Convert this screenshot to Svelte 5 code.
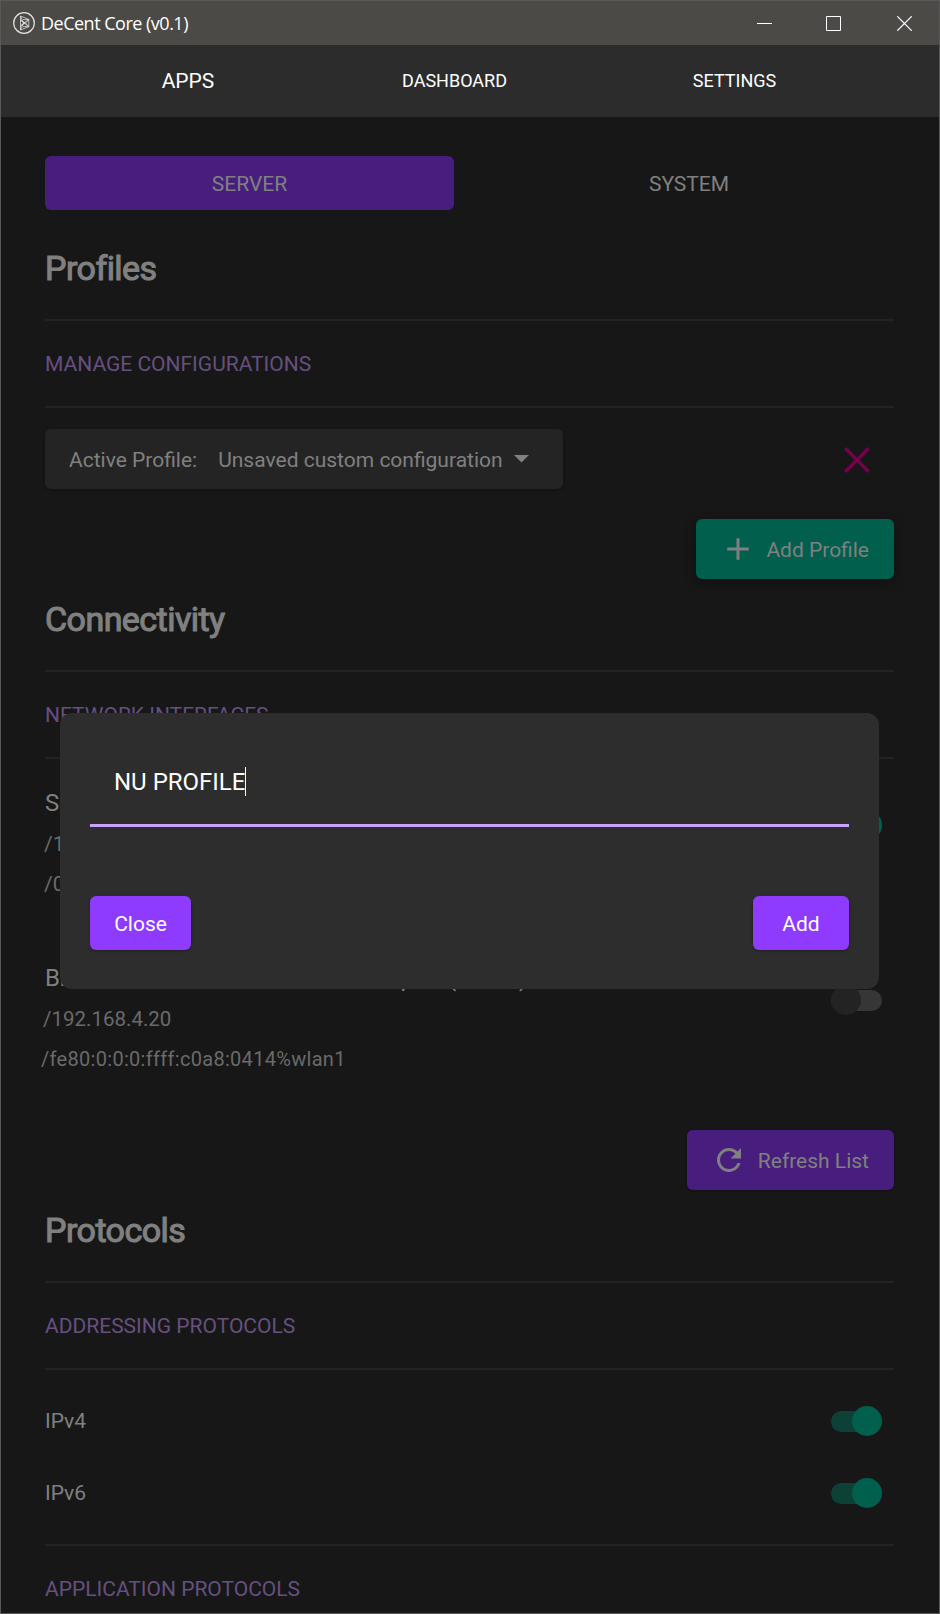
<script>
  let profileName = $state('NU PROFILE');
  const interfaces = [
    { name: 'Software Loopback Interface 1 (lo)', v4: '/127.0.0.1', v6: '/0:0:0:0:0:0:0:1', on: true },
    { name: 'Broadcom 802.11ac Network Adapter (wlan1)', v4: '/192.168.4.20', v6: '/fe80:0:0:0:ffff:c0a8:0414%wlan1', on: false }
  ];
  const protocols = ['IPv4', 'IPv6'];
</script>

{#snippet toggle(on)}
  <span class="toggle" class:on><i></i></span>
{/snippet}

<div class="window">
  <header class="titlebar">
    <svg class="logo" width="22" height="22" viewBox="0 0 22 22" fill="none" stroke="#e4e4e4">
      <circle cx="11" cy="11" r="10.3" stroke-width="1.2" />
      <path d="M7.5 4v14L15.8 14.6V7.4zM7.5 4l3 7-3 7M7.5 8.2l8.3 6.4M7.5 13.8l8.3-6.4M7.5 8.2l5 2.8-5 2.8M10 7.6h5.8L12.5 11l3.3 3.6H10" stroke-width=".75" />
    </svg>
    <span class="title">DeCent Core (v0.1)</span>
    <svg class="controls" width="155" height="15" viewBox="0 0 155 15" fill="none" stroke="#fff">
      <path d="M0 7.5h15M69.5.5h14v14h-14z" />
      <path d="M140.3.3l14.4 14.4M154.7.3l-14.4 14.4" stroke-width="1.2" />
    </svg>
  </header>

  <nav class="nav">
    <span class="active">APPS</span>
    <span>DASHBOARD</span>
    <span>SETTINGS</span>
  </nav>

  <main>
    <div class="tabs">
      <span class="tab selected">SERVER</span>
      <span class="tab">SYSTEM</span>
    </div>

    <h1 class="first">Profiles</h1>
    <h2>MANAGE CONFIGURATIONS</h2>
    <div class="profile-row">
      <div class="select">
        <span class="label">Active Profile:</span>
        <span class="value">Unsaved custom configuration</span>
        <svg width="15" height="8" viewBox="0 0 15 8"><path d="M0 0h15L7.5 7.6z" fill="#808080" /></svg>
      </div>
      <svg class="remove" width="26" height="26" viewBox="0 0 26 26" fill="none" stroke="#76004a" stroke-width="3.5">
        <path d="M1.3 1.3l23.4 23.4M24.7 1.3L1.3 24.7" />
      </svg>
    </div>
    <div class="actions">
      <span class="button teal">
        <svg width="22" height="22" viewBox="0 0 22 22" fill="none" stroke="#808080" stroke-width="3"><path d="M11 .2v21.6M.2 11h21.6" /></svg>
        <span>Add Profile</span>
      </span>
    </div>

    <h1>Connectivity</h1>
    <h2>NETWORK INTERFACES</h2>
    {#each interfaces as item, i}
      <div class="iface">
        <div class="info">
          <div class="name">{item.name}</div>
          <div class="addr" class:v4={i === 1}>{item.v4}</div>
          <div class="addr" class:v6={i === 1}>{item.v6}</div>
        </div>
        {@render toggle(item.on)}
      </div>
    {/each}
    <div class="actions refresh">
      <span class="button purple">
        <svg width="24" height="24" viewBox="4 4 16 16" fill="#808080"><path d="M17.65 6.35A7.96 7.96 0 0 0 12 4a8 8 0 1 0 7.73 10h-2.08A6 6 0 1 1 12 6c1.66 0 3.14.69 4.22 1.78L13 11h7V4z" /></svg>
        <span>Refresh List</span>
      </span>
    </div>

    <h1>Protocols</h1>
    <h2>ADDRESSING PROTOCOLS</h2>
    <div class="protocols">
      {#each protocols as name}
        <div class="protocol"><span>{name}</span>{@render toggle(true)}</div>
      {/each}
    </div>
    <h2 class="last">APPLICATION PROTOCOLS</h2>
  </main>

  <section class="dialog">
    <div class="field"><span>{profileName}</span><i class="caret"></i></div>
    <div class="dialog-actions">
      <button class="close">Close</button>
      <button class="add">Add</button>
    </div>
  </section>
</div>

<style>
  :global(body) { background: #171717; }
  .window {
    position: relative;
    box-sizing: border-box;
    width: 940px;
    height: 1614px;
    overflow: hidden;
    border: 1px solid #5a5958;
    background: #171717;
    color: #808080;
    font: 21px/30px Roboto, sans-serif;
  }
  svg { display: block; flex: none; }
  .titlebar {
    display: flex;
    align-items: center;
    box-sizing: border-box;
    height: 44px;
    padding: 0 27px 0 12px;
    background: #4b4a47;
    color: #fff;
  }
  .logo { margin-top: -1px; }
  .title {
    flex: 1;
    margin-left: 6px;
    font: 18px/44px "Open Sans", sans-serif;
    letter-spacing: -.5px;
  }
  .nav {
    display: grid;
    grid-template-columns: 374px 159px 401px;
    height: 72px;
    background: #2c2c2c;
    color: #fff;
    font-size: 18px;
    line-height: 72px;
    text-align: center;
  }
  .nav .active { font-size: 21px; }
  main { padding: 39px 45px 0 44px; }
  .tabs { display: grid; grid-template-columns: 409px 408px; gap: 31px; }
  .tab { box-sizing: border-box; height: 54px; padding-top: 2px; border-radius: 6px; line-height: 52px; text-align: center; }
  .selected { background: #471e7e; }
  h1 {
    margin: 10px 0 0;
    padding-bottom: 21px;
    border-bottom: 2px solid #222;
    font-size: 34px;
    font-weight: 400;
    letter-spacing: -.55px;
    line-height: 60px;
    -webkit-text-stroke: 1.1px #808080;
  }
  h1.first { margin-top: 28px; }
  h2 {
    margin: 0;
    padding-top: 2px;
    border-bottom: 2px solid #222;
    color: #65507f;
    font-size: 21px;
    font-weight: 400;
    line-height: 83px;
  }
  .profile-row {
    display: flex;
    align-items: center;
    justify-content: space-between;
    padding: 21px 24px 30px 0;
  }
  .remove { margin-top: 2px; }
  .select {
    display: flex;
    align-items: center;
    box-sizing: border-box;
    width: 518px;
    height: 60px;
    padding-left: 24px;
    border-radius: 6px;
    background: #242424;
    box-shadow: 0 1px 3px #0004;
  }
  .label, .value, .button span { padding-top: 2px; }
  .value { margin: 0 11px 0 21px; }
  .actions { display: flex; justify-content: flex-end; }
  .refresh { margin-top: 21px; }
  .button {
    display: flex;
    align-items: center;
    justify-content: space-between;
    box-sizing: border-box;
    height: 60px;
    border-radius: 6px;
  }
  .teal { width: 198px; padding: 0 25px 0 31px; background: #005f4d; box-shadow: 0 3px 12px #0005; }
  .purple { width: 207px; padding: 0 25px 0 30px; background: #471e7e; box-shadow: 0 1px 3px #0005; }
  .iface { display: flex; justify-content: space-between; box-sizing: border-box; height: 175px; padding: 24px 12px 0 0; }
  .iface .toggle { margin-top: 27px; }
  .name { font-size: 24px; letter-spacing: -.14px; line-height: 41px; white-space: nowrap; }
  .addr { margin-left: -1px; color: #6a6a6a; line-height: 40px; }
  .v4 { margin-left: -2px; font-size: 20.5px; letter-spacing: 0; }
  .v6 { margin-left: -4px; font-size: 20px; letter-spacing: .3px; }
  .toggle { display: flex; align-items: center; flex: none; width: 51px; height: 30px; }
  .toggle::before { content: ""; flex: none; width: 51px; height: 21px; border-radius: 11px; background: #363636; }
  .toggle i { flex: none; width: 30px; height: 30px; margin-left: -51px; border-radius: 50%; background: #232323; }
  .toggle.on::before { background: #0d4037; }
  .toggle.on i { margin-left: -30px; background: #005f4d; }
  .protocols { padding: 15px 12px 15px 0; border-bottom: 2px solid #222; }
  .protocol { display: flex; align-items: center; justify-content: space-between; height: 72px; }
  h2.last { border: 0; }
  .dialog {
    position: absolute;
    left: 59px;
    top: 712px;
    box-sizing: border-box;
    width: 819px;
    height: 276px;
    padding: 30px;
    border-radius: 12px;
    background: #2d2d2d;
    color: #fff;
  }
  .field {
    display: flex;
    align-items: center;
    box-sizing: border-box;
    height: 84px;
    padding: 0 24px 4px;
    border-bottom: 3px solid #c9a2ff;
    font-size: 24px;
  }
  .caret { width: 1px; height: 29px; background: #fff; }
  .dialog-actions { display: flex; justify-content: space-between; margin-top: 69px; }
  button {
    height: 54px;
    padding: 2px 0 0;
    border: 0;
    border-radius: 6px;
    background: #8e3aff;
    box-shadow: 0 1px 3px #0005;
    color: #fff;
    font: 21px/52px Roboto, sans-serif;
  }
  .close { width: 101px; }
  .add { width: 96px; }
</style>
